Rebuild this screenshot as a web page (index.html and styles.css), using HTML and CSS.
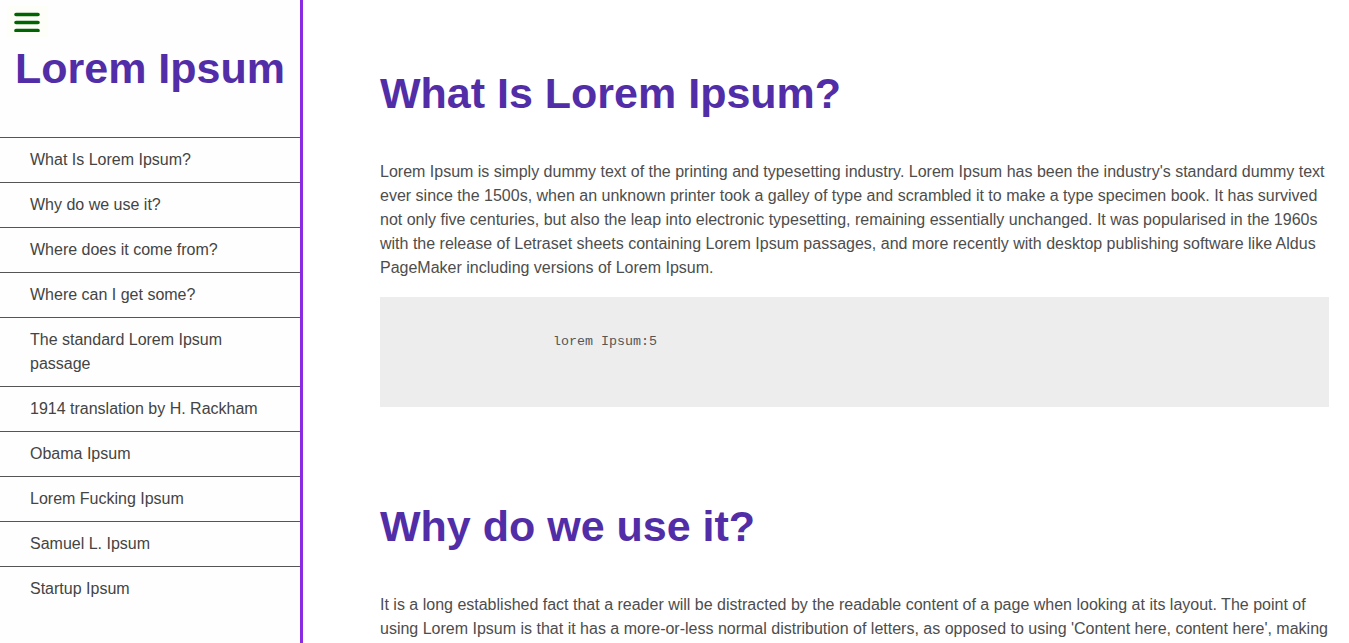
FILE: index.html
```html
<!DOCTYPE html>
<html lang="en">
<head>
<meta charset="utf-8">
<title>Lorem Ipsum</title>
<link rel="stylesheet" href="styles.css">
</head>
<body>
<div class="layout">
  <aside class="sidebar">
    <div class="menu-btn" role="button" aria-label="Menu">
      <svg width="26" height="20" viewBox="0 0 26 20">
        <path d="M2 2.5H24M2 10.5H24M2 18.5H24" stroke="#006400" stroke-width="3.6" stroke-linecap="round" fill="none"/>
      </svg>
    </div>
    <div class="brand">Lorem Ipsum</div>
    <nav class="nav">
      <a class="nav-item" href="#">What Is Lorem Ipsum?</a>
      <a class="nav-item" href="#">Why do we use it?</a>
      <a class="nav-item" href="#">Where does it come from?</a>
      <a class="nav-item" href="#">Where can I get some?</a>
      <a class="nav-item" href="#">The standard Lorem Ipsum passage</a>
      <a class="nav-item" href="#">1914 translation by H. Rackham</a>
      <a class="nav-item" href="#">Obama Ipsum</a>
      <a class="nav-item" href="#">Lorem Fucking Ipsum</a>
      <a class="nav-item" href="#">Samuel L. Ipsum</a>
      <a class="nav-item" href="#">Startup Ipsum</a>
    </nav>
  </aside>
  <main class="main">
    <section class="section">
      <h1 class="heading">What Is Lorem Ipsum?</h1>
      <p class="text">Lorem Ipsum is simply dummy text of the printing and typesetting industry. Lorem Ipsum has been the industry's standard dummy text ever since the 1500s, when an unknown printer took a galley of type and scrambled it to make a type specimen book. It has survived not only five centuries, but also the leap into electronic typesetting, remaining essentially unchanged. It was popularised in the 1960s with the release of Letraset sheets containing Lorem Ipsum passages, and more recently with desktop publishing software like Aldus PageMaker including versions of Lorem Ipsum.</p>
      <pre class="code">lorem Ipsum:5</pre>
    </section>
    <section class="section">
      <h1 class="heading">Why do we use it?</h1>
      <p class="text">It is a long established fact that a reader will be distracted by the readable content of a page when looking at its layout. The point of using Lorem Ipsum is that it has a more-or-less normal distribution of letters, as opposed to using 'Content here, content here', making it look like readable English. Many desktop publishing packages and web page editors now use Lorem Ipsum as their default model text, and a search for 'lorem ipsum' will uncover many web sites still in their infancy.</p>
    </section>
  </main>
</div>
</body>
</html>
```
FILE: styles.css
```css
html, body {
  margin: 0;
  padding: 0;
  height: 100%;
  overflow: hidden;
}
body {
  font-family: "Liberation Sans", Arial, sans-serif;
  background: #ffffff;
  color: #4a4a4a;
}
.layout {
  display: flex;
  height: 100vh;
}
.sidebar {
  width: 300px;
  flex: 0 0 300px;
  border-right: 3px solid #8a2be2;
  background: #fefefe;
  display: flex;
  flex-direction: column;
}
.menu-btn {
  margin: 6px 0 0 7px;
  width: 41px;
  height: 31px;
  box-sizing: border-box;
  padding: 6px 0 0 7px;
  background: #fefef8;
  line-height: 0;
}
.brand {
  margin: 7px 0 0 15px;
  font-size: 43px;
  font-weight: bold;
  color: #512da8;
  line-height: 49px;
  white-space: nowrap;
}
.nav {
  margin-top: 44px;
  display: flex;
  flex-direction: column;
}
.nav-item {
  display: block;
  border-top: 1px solid #555555;
  padding: 10px 30px;
  font-size: 16px;
  line-height: 24px;
  color: #444444;
  text-decoration: none;
}
.main {
  flex: 1;
  padding: 69px 20px 0 77px;
  overflow: hidden;
}
.section + .section {
  margin-top: 95px;
}
.heading {
  margin: 0 0 42px;
  font-size: 43px;
  line-height: 49px;
  font-weight: bold;
  color: #512da8;
}
.text {
  margin: 0 0 17px;
  font-size: 16px;
  line-height: 24px;
  color: #4d4d4d;
}
.code {
  margin: 0;
  height: 110px;
  box-sizing: border-box;
  padding: 37px 20px 0 173px;
  background: #ededed;
  font-family: "Liberation Mono", "Courier New", monospace;
  font-size: 13.33px;
  line-height: 15px;
  color: #555555;
}
```
